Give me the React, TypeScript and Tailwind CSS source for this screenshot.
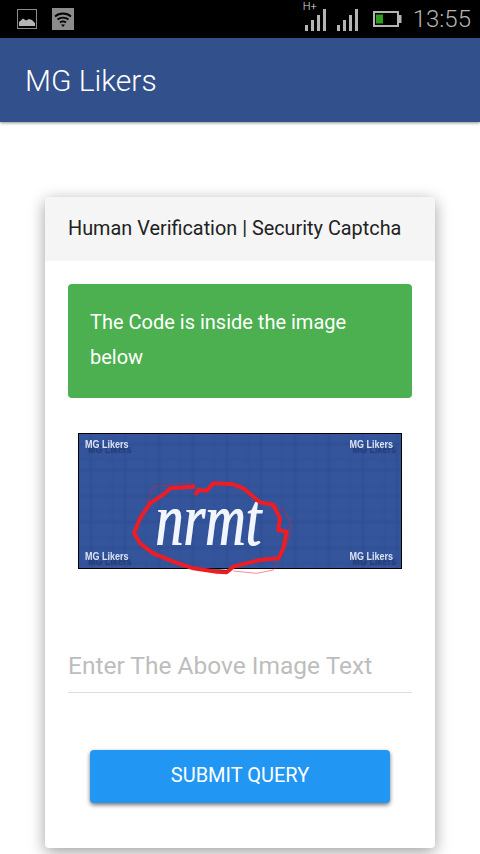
const Signal = () => (
  <svg width="21" height="22" viewBox="0 0 21 22" fill="#b5b5b5">
    <rect x="0" y="16" width="3" height="6" />
    <rect x="6" y="11" width="3" height="11" />
    <rect x="12" y="6" width="3" height="16" />
    <rect x="18" y="0" width="3" height="22" />
  </svg>
);

const Watermark = () => (
  <span className="text-[9px] leading-3 font-bold text-[#dbe4f4] font-['Liberation_Sans',sans-serif] blur-[0.6px] scale-y-125 [text-shadow:3px_4px_1px_rgba(20,35,80,0.55)]">
    MG Likers
  </span>
);

const StatusBar = () => (
  <div className="h-[38px] bg-black flex items-center pl-[17px] pr-[9px]">
    <svg width="20" height="20" viewBox="0 0 20 20" className="mr-[15px]">
      <rect x="0.5" y="0.5" width="19" height="19" fill="none" stroke="#8c8c8c" />
      <path d="M2 17V13L6 9.5L9 11.5L12 10L15 11L18 14V17Z" fill="#b5b5b5" />
    </svg>
    <svg width="22" height="22" viewBox="0 0 22 22">
      <rect width="22" height="22" fill="#8c8c8c" />
      <path d="M3 8.5C7.5 4.5 14.5 4.5 19 8.5M5.5 11.5C8.5 9 13.5 9 16.5 11.5M8 14.5C9.8 13.2 12.2 13.2 14 14.5" fill="none" stroke="#000" strokeWidth="1.8" />
      <path d="M9 16.5H13L11 19Z" fill="#000" />
    </svg>
    <div className="flex-1" />
    <div className="relative flex gap-[11px] items-center mr-[15px] mt-[1px]">
      <span className="absolute left-[-2px] top-[-8px] text-[11px] leading-[12px] text-[#e0e0e0] font-light">H+</span>
      <Signal />
      <Signal />
    </div>
    <svg width="29" height="16" viewBox="0 0 29 16" className="mr-[11px]">
      <rect x="1" y="1" width="24" height="14" fill="none" stroke="#b5b5b5" strokeWidth="2" />
      <rect x="26" y="4" width="2.5" height="8" fill="#b5b5b5" />
      <rect x="3" y="3.5" width="7" height="9" fill="#2e9e1f" />
    </svg>
    <span className="text-[24px] leading-none font-light text-[#b5b5b5]">13:55</span>
  </div>
);

const Captcha = () => (
  <div className="relative mx-[10px] mt-[35px] h-[136px] border border-black bg-[#34559c] flex flex-col justify-between pt-[4px] pb-[6px] pl-[6px] pr-[8px]">
    <svg className="absolute inset-0 w-full h-full blur-[1px]">
      <defs>
        <pattern id="grid" width="34" height="26" patternUnits="userSpaceOnUse">
          <path d="M34 0V26M0 26H34M12 0V26M0 10H34" fill="none" stroke="#1f3a78" strokeOpacity="0.3" strokeWidth="1.5" />
        </pattern>
      </defs>
      <rect width="100%" height="100%" fill="url(#grid)" />
    </svg>
    <div className="relative flex justify-between">
      <Watermark />
      <Watermark />
    </div>
    <div className="relative flex justify-between">
      <Watermark />
      <Watermark />
    </div>
    <span className="absolute left-[76px] top-[60px] text-[56px] leading-[50px] italic text-[#f2f6fc] font-['Liberation_Serif',serif] blur-[0.5px] scale-y-[1.35] [text-shadow:1px_0_0_#f2f6fc]">
      nrmt
    </span>
    {/* red scribble around the code, runs past the image edge */}
    <svg className="absolute left-[-9px] top-[-9px] overflow-visible" width="340" height="155" viewBox="0 0 1020 465" fill="none">
      <path d="M375 210L385 195L410 197L430 175L490 178L520 190L570 232L610 240L630 280L625 315L650 320L640 370L625 400L570 405L490 425L470 442L440 440L370 430L310 410L250 385L210 355L192 325L210 280L240 235L285 205L300 190L375 185" stroke="#ee1c25" strokeWidth="12" strokeLinejoin="round" />
      <path d="M250 185L330 176L380 178M600 228L645 260L665 300L650 360L610 435L560 445L490 438M230 235L250 185M210 355L260 385" stroke="#ee1c25" strokeWidth="1.5" />
      <path d="M430 432L470 436" stroke="#111" strokeWidth="2" />
    </svg>
  </div>
);

export default function App() {
  return (
    <div className="h-[854px] w-[480px] overflow-hidden bg-white font-['Roboto',sans-serif]">
      <StatusBar />
      <header className="h-[84px] bg-[#32508b] flex items-center pl-[25px] shadow-[0_1px_3px_rgba(0,0,0,0.45)]">
        <h1 className="text-[30px] font-light text-white">MG Likers</h1>
      </header>
      <main className="pt-[75px] px-[45px]">
        <div className="h-[651px] rounded-[4px] bg-white shadow-[0_4px_16px_rgba(0,0,0,0.38)]">
          <div className="h-[64px] rounded-t-[4px] bg-[#f5f5f5] flex items-center px-[23px] pb-[1px] text-[19.85px] text-[#222]">
            Human Verification | Security Captcha
          </div>
          <div className="px-[23px] pt-[23px]">
            <div className="h-[114px] rounded-[4px] bg-[#4caf50] px-[22px] py-[21px] text-[20px] leading-[35px] text-white">
              The Code is inside the image below
            </div>
            <Captcha />
            <input
              placeholder="Enter The Above Image Text"
              className="mt-[74px] block w-full h-[50px] pb-[4px] border-b border-[#ddd] text-[24.5px] outline-none placeholder:text-[#bdbdbd]"
            />
            <button className="mt-[57px] mx-[22px] block w-[300px] h-[53px] pb-[4px] rounded-[4px] bg-[#2196f3] text-white text-[20px] uppercase shadow-[0_2px_4px_rgba(0,0,0,0.55)]">
              Submit Query
            </button>
          </div>
        </div>
      </main>
    </div>
  );
}
